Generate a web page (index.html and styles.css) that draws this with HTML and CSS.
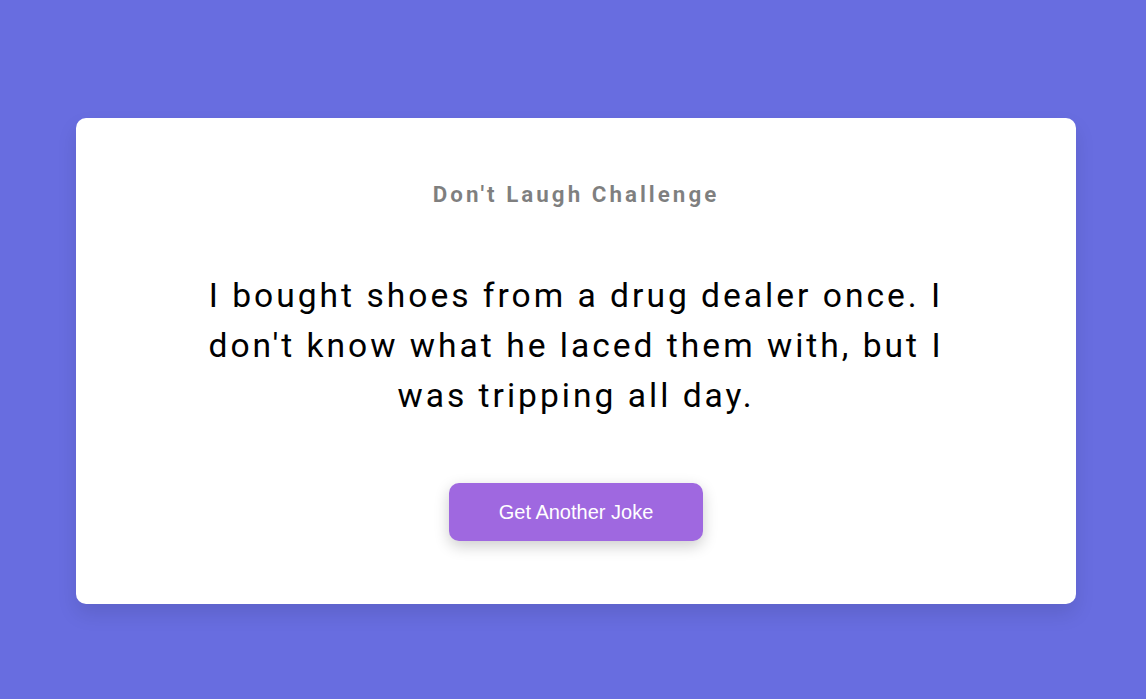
FILE: index.html
```html
<!DOCTYPE html>
<html>
<head>
<meta charset="utf-8">
<link rel="stylesheet" href="styles.css">
</head>
<body>
<div class="card">
  <h3 class="title">Don't Laugh Challenge</h3>
  <div class="joke">I bought shoes from a drug dealer once. I don't know what he laced them with, but I was tripping all day.</div>
  <button class="btn">Get Another Joke</button>
</div>
</body>
</html>
```
FILE: styles.css
```css
* { box-sizing: border-box; }
html, body { margin: 0; height: 100%; }
body {
  background: #686de0;
  font-family: Roboto, "Noto Sans", sans-serif;
  display: flex;
  flex-direction: column;
  align-items: center;
  padding: 118px 0 0 6px;
}
.card {
  width: 1000px;
  background: #fff;
  border-radius: 10px;
  box-shadow: 0 10px 20px rgba(0,0,0,0.1);
  padding: 63px 20px 63px;
  text-align: center;
  display: flex;
  flex-direction: column;
  align-items: center;
}
.title {
  margin: 0;
  font-size: 22.4px;
  font-weight: 700;
  letter-spacing: 3px;
  color: rgba(0,0,0,0.5);
  line-height: 26px;
}
.joke {
  font-size: 33.6px;
  line-height: 50px;
  letter-spacing: 3px;
  max-width: 780px;
  margin: 64px auto 62px;
  color: #000;
}
.btn {
  background: #9f68e0;
  color: #fff;
  border: 0;
  border-radius: 10px;
  box-shadow: 0 5px 15px rgba(0,0,0,0.2);
  padding: 17px 50px;
  font-family: "Liberation Sans", Arial, sans-serif;
  font-size: 20px;
  line-height: 24px;
}
```
